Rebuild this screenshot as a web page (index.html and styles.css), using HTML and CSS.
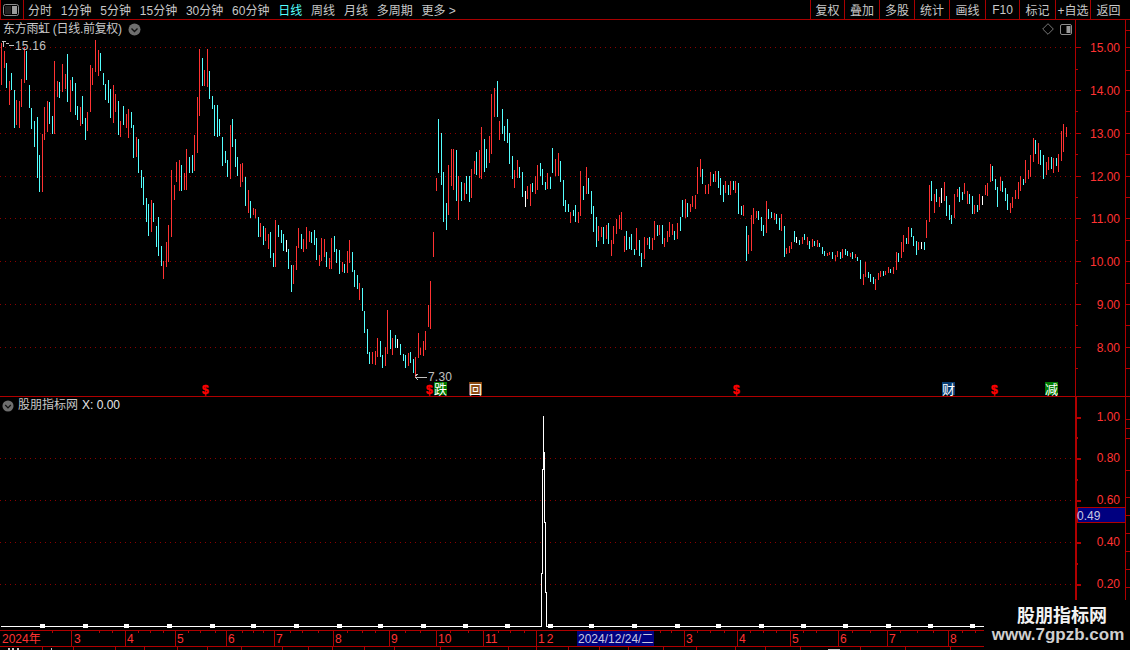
FILE: index.html
```html
<!DOCTYPE html>
<html lang="zh-CN">
<head>
<meta charset="utf-8">
<title>东方雨虹</title>
<link rel="stylesheet" href="styles.css">
</head>
<body>
<div class="app">
  <header class="toolbar">
    <div class="tool-icon">
      <svg class="panel-glyph" width="16" height="12" viewBox="0 0 16 12"><rect x="0.5" y="0.5" width="15" height="11" rx="2" fill="none" stroke="#8c8c8c"/><rect x="9" y="2" width="5" height="8" fill="#9a9a9a"/><rect x="2" y="2" width="6" height="8" fill="#222"/></svg>
    </div>
    <nav class="tabs">
      <span>分时</span><span>1分钟</span><span>5分钟</span><span>15分钟</span><span>30分钟</span><span>60分钟</span><span class="on">日线</span><span>周线</span><span>月线</span><span>多周期</span><span>更多 &gt;</span>
    </nav>
    <div class="actions">
      <span>复权</span><span>叠加</span><span>多股</span><span>统计</span><span>画线</span><span>F10</span><span>标记</span><span>+自选</span><span>返回</span>
    </div>
  </header>

  <section class="panel price">
    <svg class="chart" width="1130" height="376" viewBox="0 20 1130 376" shape-rendering="crispEdges">
      <path class="grid" d="M0 47.5H1074M0 90.5H1074M0 133.5H1074M0 176.5H1074M0 218.5H1074M0 261.5H1074M0 304.5H1074M0 347.5H1074"/>
      <path class="c-red" d="M1.5 43V85M4.5 51V68M9.5 81V105M16.5 100V125M19.5 101V128M21.5 79V107M24.5 47V83M42.5 134V192M44.5 107V140M47.5 101V132M54.5 61V134M57.5 81V97M62.5 64V92M65.5 74V89M70.5 80V112M80.5 107V126M87.5 112V131M90.5 65V112M92.5 68V85M95.5 40V72M98.5 50V76M113.5 85V123M115.5 94V112M120.5 121V137M126.5 114V128M128.5 109V138M136.5 137V157M151.5 200V232M163.5 261V279M166.5 242V267M168.5 225V262M171.5 170V237M174.5 185V200M176.5 162V182M179.5 160V191M184.5 173V190M186.5 149V190M194.5 135V171M197.5 97V153M199.5 49V116M204.5 70V86M207.5 49V87M230.5 125V179M240.5 164V187M242.5 163V182M248.5 190V213M253.5 208V215M255.5 209V218M260.5 223V237M265.5 228V241M268.5 234V249M275.5 220V267
      M293.5 265V284M296.5 246V270M298.5 228V248M303.5 239V252M306.5 227V249M309.5 231V242M319.5 255V266M321.5 238V261M324.5 239V257M329.5 258V269M331.5 238V269M342.5 262V272M347.5 251V273M349.5 240V263M359.5 283V300M372.5 352V364M375.5 351V365M377.5 338V357M385.5 347V366M387.5 310V354M392.5 338V355M408.5 353V366M415.5 357V377M418.5 333V358M420.5 348V355M423.5 341V356M425.5 331V350M428.5 305V327M430.5 281V329M433.5 232V257M436.5 178V191M448.5 165V215M451.5 149V186M453.5 149V190M458.5 176V220M464.5 183V200M471.5 169V198M474.5 161V174M479.5 150V178M481.5 127V179M489.5 136V163M491.5 94V154M494.5 88V117M499.5 121V140M514.5 170V188M517.5 160V178M527.5 186V199M530.5 184V206M535.5 176V194M537.5 165V190M547.5 173V189M555.5 159V176M558.5 153V176
      M570.5 212V223M578.5 212V223M580.5 171V216M586.5 167V194M598.5 226V241M601.5 227V237M606.5 225V239M611.5 240V256M613.5 226V244M616.5 219V234M619.5 215V229M621.5 212V230M624.5 236V252M636.5 228V250M644.5 237V259M647.5 238V245M652.5 238V250M654.5 221V240M659.5 225V235M664.5 238V247M667.5 231V242M669.5 222V237M672.5 224V235M677.5 223V239M685.5 199V218M690.5 204V212M692.5 196V207M695.5 195V209M697.5 167V194M700.5 159V177M705.5 185V194M708.5 184V194M710.5 172V186M715.5 171V182M725.5 181V193M730.5 181V195M735.5 181V193M743.5 205V216M748.5 235V254M751.5 215V251M753.5 208V224M756.5 211V218M766.5 201V233M774.5 213V220M781.5 214V231M786.5 248V254M789.5 246V253M791.5 242V249M802.5 237V244M807.5 237V245M812.5 239V247M817.5 240V247
      M827.5 253V256M829.5 252V255M835.5 255V261M837.5 251V257M842.5 249V258M850.5 253V257M855.5 254V258M863.5 274V285M865.5 262V277M875.5 279V290M878.5 273V280M880.5 271V277M885.5 271V275M888.5 267V273M893.5 267V274M896.5 252V270M901.5 242V258M903.5 235V252M908.5 227V244M918.5 242V250M926.5 220V238M929.5 185V222M934.5 194V213M939.5 197V207M944.5 182V201M954.5 194V218M957.5 189V197M964.5 183V194M967.5 191V204M974.5 205V214M979.5 194V210M985.5 185V195M987.5 183V196M990.5 164V182M1000.5 177V191M1010.5 203V213M1012.5 197V208M1015.5 190V199M1018.5 182V199M1020.5 176V191M1025.5 160V183M1028.5 170V179M1030.5 155V177M1033.5 138V162M1038.5 143V164M1046.5 162V175M1048.5 157V170M1053.5 158V173M1058.5 154V172M1061.5 131V161M1063.5 124V152M1066.5 127V137"/>
      <path class="c-cyan" d="M6.5 63V88M11.5 73V90M14.5 90V128M26.5 51V80M29.5 85V108M31.5 108V129M34.5 121V147M37.5 117V178M39.5 155V192M49.5 102V124M52.5 116V134M59.5 82V98M67.5 54V102M72.5 77V91M75.5 83V115M77.5 106V120M82.5 96V124M85.5 118V140M100.5 53V71M103.5 73V85M105.5 84V100M108.5 80V103M110.5 89V118M118.5 101V135M123.5 106V125M131.5 112V128M133.5 125V158M138.5 139V173M141.5 170V188M143.5 177V205M146.5 198V222M148.5 204V236M153.5 203V222M156.5 226V247M158.5 217V256M161.5 246V266M181.5 165V191M189.5 157V173M192.5 155V173M202.5 58V86M209.5 71V99M212.5 96V109M214.5 105V136M217.5 105V137M219.5 119V136M222.5 137V166M225.5 151V163M227.5 160V177M232.5 119V147M235.5 139V167M237.5 157V176M245.5 177V206M250.5 201V218M258.5 217V237M263.5 226V245M270.5 232V258M273.5 253V267M278.5 225V237
      M281.5 230V243M283.5 234V251M288.5 249V269M291.5 265V292M301.5 234V249M311.5 232V243M314.5 230V245M316.5 238V260M326.5 252V267M334.5 236V252M336.5 249V263M339.5 250V274M344.5 264V273M352.5 252V272M354.5 270V287M357.5 275V289M362.5 288V311M364.5 311V333M367.5 329V354M369.5 352V364M380.5 341V357M382.5 355V368M390.5 330V349M395.5 335V348M400.5 344V355M403.5 354V361M405.5 355V368M410.5 352V363M413.5 359V373M438.5 119V173M441.5 133V185M443.5 172V222M446.5 203V230M456.5 150V201M461.5 182V201M466.5 176V194M469.5 176V202M476.5 152V175M484.5 139V172M486.5 149V168M497.5 81V117M502.5 109V134M504.5 126V141M507.5 119V143M509.5 133V164M512.5 156V179M519.5 167V178M522.5 172V197M532.5 183V192M540.5 163V176M542.5 169V185M545.5 182V190M550.5 177V189M552.5 148V173
      M560.5 161V182M563.5 180V206M565.5 200V212M568.5 204V212M573.5 210V216M575.5 205V222M583.5 186V200M588.5 178V194M591.5 191V214M593.5 206V232M596.5 217V247M603.5 227V244M608.5 223V244M626.5 231V250M629.5 237V249M631.5 234V250M634.5 249V255M639.5 240V256M641.5 253V267M649.5 237V249M657.5 225V236M662.5 225V244M674.5 231V240M680.5 217V231M682.5 200V217M687.5 203V217M702.5 169V184M713.5 174V182M718.5 171V188M720.5 178V195M723.5 185V202M728.5 185V195M733.5 181V190M738.5 183V214M741.5 206V215M746.5 226V261M758.5 211V220M761.5 217V231M763.5 225V236M768.5 209V219M771.5 212V218M776.5 214V224M779.5 218V230M784.5 226V257M794.5 231V242M799.5 240V245M804.5 234V240M809.5 241V249M814.5 241V246M819.5 243V247
      M822.5 247V254M824.5 251V256M832.5 252V259M840.5 252V259M845.5 249V255M847.5 251V256M852.5 252V259M857.5 257V261M860.5 260V279M868.5 272V278M870.5 274V282M873.5 277V284M883.5 271V276M890.5 269V273M898.5 253V262M906.5 238V244M911.5 228V237M913.5 236V246M916.5 241V255M924.5 242V250M931.5 181V201M936.5 189V202M946.5 196V216M949.5 205V220M951.5 215V224M959.5 187V202M962.5 192V200M969.5 194V204M972.5 196V214M977.5 205V212M992.5 166V181M995.5 179V190M997.5 187V207M1002.5 181V192M1005.5 188V201M1007.5 194V210M1023.5 179V185M1035.5 140V154M1040.5 150V165M1043.5 155V179M1051.5 157V169M1056.5 158V166"/>
      <path class="c-white" d="M286.5 240V252M397.5 339V348M525.5 191V207M796.5 237V243M921.5 242V249M941.5 188V203M982.5 196V205"/>
      <path class="axis" d="M1075.5 20V396M1125.5 20V396M1075 47.5H1081M1075 90.5H1081M1075 133.5H1081M1075 176.5H1081M1075 218.5H1081M1075 261.5H1081M1075 304.5H1081M1075 347.5H1081M1075 69.5H1078M1075 111.5H1078M1075 154.5H1078M1075 197.5H1078M1075 240.5H1078M1075 283.5H1078M1075 325.5H1078M1075 368.5H1078M1126 30.5H1130M1126 47.5H1130M1126 70.5H1130M1126 90.5H1130M1126 111.5H1130M1126 133.5H1130M1126 154.5H1130M1126 176.5H1130M1126 197.5H1130M1126 218.5H1130M1126 240.5H1130M1126 261.5H1130M1126 283.5H1130M1126 304.5H1130M1126 325.5H1130M1126 347.5H1130M1126 368.5H1130"/>
      <g class="labels" text-anchor="end">
        <text x="1120" y="52">15.00</text><text x="1120" y="95">14.00</text><text x="1120" y="138">13.00</text><text x="1120" y="181">12.00</text><text x="1120" y="223">11.00</text><text x="1120" y="266">10.00</text><text x="1120" y="309">9.00</text><text x="1120" y="352">8.00</text>
      </g>
      <path class="note-line" d="M2 41H3V47M3 41H6M6 43H9M9 45H14M415 377H427M415 376L418 374M415 377L418 380"/>
      <text class="note" x="15" y="50">15.16</text>
      <text class="note" x="428" y="381">7.30</text>
      <g class="marks">
        <text class="dollar" x="202" y="394">$</text>
        <text class="dollar" x="426" y="394">$</text>
        <text class="dollar" x="733" y="394">$</text>
        <text class="dollar" x="991" y="394">$</text>
        <rect class="m-green" x="434" y="382" width="13" height="13"/><text class="m-text" x="434" y="394">跌</text>
        <rect class="m-brown" x="469" y="382" width="13" height="13"/><text class="m-text" x="469" y="394">回</text>
        <rect class="m-blue" x="942" y="382" width="13" height="13"/><text class="m-text" x="942" y="394">财</text>
        <rect class="m-green" x="1045" y="382" width="13" height="13"/><text class="m-text" x="1045" y="394">减</text>
      </g>
    </svg>
    <div class="caption">
      <span class="title">东方雨虹 (日线.前复权)</span>
      <svg class="chev" width="13" height="13" viewBox="0 0 13 13"><circle cx="6.5" cy="6.5" r="6" fill="#6e6e6e"/><path d="M3.5 5.5L6.5 8.5L9.5 5.5" fill="none" stroke="#111" stroke-width="1.4"/></svg>
    </div>
    <div class="corner-tools">
      <svg width="12" height="12" viewBox="0 0 12 12"><path d="M6 .7L11.3 6L6 11.3L.7 6Z" fill="none" stroke="#777"/></svg>
      <svg width="12" height="11" viewBox="0 0 12 11"><rect x=".5" y=".5" width="11" height="10" rx="1.5" fill="none" stroke="#8c8c8c"/><rect x="6.5" y="2" width="4" height="7" fill="#9a9a9a"/></svg>
    </div>
  </section>

  <section class="panel indicator">
    <svg class="chart" width="1130" height="233" viewBox="0 397 1130 233" shape-rendering="crispEdges">
      <path class="grid" d="M0 458.5H1074M0 500.5H1074M0 542.5H1074M0 584.5H1074"/>
      <path class="axis thick" d="M1076 397V600M1075 417.5H1081M1075 458.5H1081M1075 500.5H1081M1075 542.5H1081M1075 584.5H1081M1075 437.5H1078M1075 479.5H1078M1075 521.5H1078M1075 563.5H1078"/>
      <path class="axis" d="M1125.5 397V600M1126 419.5H1130M1126 428.5H1130M1126 438.5H1130M1126 470.5H1130M1126 497.5H1130M1126 515.5H1130M1126 533.5H1130M1126 551.5H1130M1126 569.5H1130M1126 587.5H1130"/>
      <g class="labels" text-anchor="end">
        <text x="1120" y="421">1.00</text><text x="1120" y="462">0.80</text><text x="1120" y="504">0.60</text><text x="1120" y="546">0.40</text><text x="1120" y="588">0.20</text>
      </g>
      <rect class="val-box" x="1077" y="507.5" width="48" height="15"/>
      <text class="val-text" x="1077" y="520">0.49</text>
      <path class="spike" d="M1 626.5H541V573.5H542V469.5H543V416V452H544V522H545V592H546V626.5H984"/>
      <path class="knots" d="M40 624h5v4h-5zM83 624h5v4h-5zM124 624h5v4h-5zM167 624h5v4h-5zM210 624h5v4h-5zM251 624h5v4h-5zM294 624h5v4h-5zM337 624h5v4h-5zM378 624h5v4h-5zM421 624h5v4h-5zM463 624h5v4h-5zM505 624h5v4h-5zM548 624h5v4h-5zM589 624h5v4h-5zM632 624h5v4h-5zM675 624h5v4h-5zM716 624h5v4h-5zM759 624h5v4h-5zM801 624h5v4h-5zM843 624h5v4h-5zM886 624h5v4h-5zM928 624h5v4h-5zM970 624h5v4h-5z"/>
    </svg>
    <div class="caption lower">
      <svg class="chev" width="12" height="12" viewBox="0 0 13 13"><circle cx="6.5" cy="6.5" r="6" fill="#6e6e6e"/><path d="M3.5 5.5L6.5 8.5L9.5 5.5" fill="none" stroke="#111" stroke-width="1.4"/></svg>
      <span>股朋指标网</span>
      <span class="x-val">X: 0.00</span>
    </div>
  </section>

  <footer class="timeline">
    <svg class="chart" width="1130" height="20" viewBox="0 630 1130 20" shape-rendering="crispEdges">
      <path class="axis" d="M0 630.5H984M0 646.5H984M71.5 631V646M125.5 631V646M175.5 631V646M226.5 631V646M274.5 631V646M333.5 631V646M389.5 631V646M436.5 631V646M483.5 631V646M536.5 631V646M684.5 631V646M737.5 631V646M790.5 631V646M838.5 631V646M887.5 631V646M948.5 631V646
      M52.5 631V633M99.5 631V633M112.5 631V633M138.5 631V633M150.5 631V633M163.5 631V633M188.5 631V633M200.5 631V633M215.5 631V633M242.5 631V633M253.5 631V633M263.5 631V633M290.5 631V633M302.5 631V633M318.5 631V633M347.5 631V633M362.5 631V633M375.5 631V633M405.5 631V633M420.5 631V633M450.5 631V633M468.5 631V633M498.5 631V633M510.5 631V633M524.5 631V633M660.5 631V633M671.5 631V633M697.5 631V633M710.5 631V633M724.5 631V633M750.5 631V633M763.5 631V633M776.5 631V633M803.5 631V633M816.5 631V633M852.5 631V633M870.5 631V633M900.5 631V633M917.5 631V633M933.5 631V633M962.5 631V633M975.5 631V633
      M42.5 647V650M73.5 647V650M115.5 647V650M144.5 647V650M177.5 647V650M207.5 647V650M241.5 647V650M282.5 647V650M308.5 647V650M332.5 647V650M364.5 647V650M394.5 647V650M440.5 647V650M508.5 647V650M536.5 647V650M568.5 647V650M599.5 647V650M628.5 647V650M663.5 647V650M696.5 647V650M735.5 647V650M765.5 647V650M800.5 647V650M860.5 647V650M905.5 647V650M950.5 647V650"/>
      <g class="labels ticks">
        <text x="2" y="643">2024年</text><text x="74" y="643">3</text><text x="127" y="643">4</text><text x="177" y="643">5</text><text x="228" y="643">6</text><text x="276" y="643">7</text><text x="335" y="643">8</text><text x="391" y="643">9</text><text x="438" y="643">10</text><text x="485" y="643">11</text><text x="538" y="643" class="wide">12</text><text x="686" y="643">3</text><text x="739" y="643">4</text><text x="792" y="643">5</text><text x="840" y="643">6</text><text x="889" y="643">7</text><text x="950" y="643">8</text>
      </g>
      <rect class="date-box" x="577" y="631" width="77" height="15"/>
      <text class="date-text" x="578" y="643">2024/12/24/二</text>
      <path class="crumbs" d="M8 648h2v2h-2zM12 648h2v2h-2zM17 648h2v2h-2zM51 648h1v2h-1zM828 649h12v1h-12z"/>
    </svg>
  </footer>

  <aside class="watermark">
    <div class="wm-name">股朋指标网</div>
    <div class="wm-url">www.7gpzb.com</div>
  </aside>
</div>
</body>
</html>
```
FILE: styles.css
```css
* { box-sizing: border-box; }
html, body { margin: 0; padding: 0; background: #000; overflow: hidden; }
body { font: 12px "Liberation Sans", "Noto Sans CJK SC", sans-serif; color: #c8c8c8; }
.app { position: relative; width: 1130px; height: 650px; display: flex; flex-direction: column; background: #000; }

.toolbar { display: flex; align-items: stretch; height: 20px; border-bottom: 1px solid #a80000; flex: none; }
.tool-icon { width: 24px; display: flex; align-items: center; justify-content: center; padding-right: 3px; border-right: 1px solid #a80000; border-left: 1px solid #a80000; }
.tabs { display: flex; align-items: center; gap: 8.8px; padding-left: 4px; flex: 1; white-space: nowrap; }
.tabs .on { color: #54ffff; }
.actions { display: grid; grid-template-columns: 34px 35px 35px 35px 36px 34px 36px 35px 40px; }
.actions span { display: flex; align-items: center; justify-content: center; border-left: 1px solid #a80000; white-space: nowrap; }
.actions span:last-child { padding-right: 4px; }

.panel { position: relative; flex: none; }
.price { height: 377px; border-bottom: 1px solid #b00000; }
.indicator { height: 233px; }
.timeline { height: 20px; flex: none; }
.chart { display: block; overflow: visible; }

.grid { fill: none; stroke: #8c0000; stroke-dasharray: 1 4; }
.c-red { fill: none; stroke: #ff3232; }
.c-cyan { fill: none; stroke: #54ffff; }
.c-white { fill: none; stroke: #fff; }
.axis { fill: none; stroke: #b00000; }
.axis.thick { stroke-width: 2; }
.labels text { font: 12px "Liberation Sans", "Noto Sans CJK SC", sans-serif; fill: #ff3232; }
.labels .wide { letter-spacing: 2px; }
.note-line { fill: none; stroke: #c0c0c0; }
.note { font: 12px "Liberation Sans", sans-serif; fill: #c0c0c0; letter-spacing: .2px; }
.dollar { font: bold 12px "Liberation Sans", sans-serif; fill: #f00; stroke: #f00; stroke-width: .4px; }
.m-green { fill: #007a00; }
.m-brown { fill: #8a4a14; }
.m-blue { fill: #063c72; }
.m-text { font: 13px "Noto Sans CJK SC", sans-serif; fill: #fff; }
.val-box { fill: #000080; stroke: #b00000; }
.val-text { font: 12px "Liberation Sans", sans-serif; fill: #c8c8e0; }
.spike { fill: none; stroke: #fff; }
.knots { fill: #fff; }
.date-box { fill: #000080; }
.date-text { font: 12px "Liberation Sans", "Noto Sans CJK SC", sans-serif; fill: #c8c8e0; }
.crumbs { fill: #c8c8c8; }

.caption { position: absolute; left: 3px; top: 2px; display: flex; align-items: center; gap: 6px; line-height: 15px; white-space: nowrap; }
.caption .title { letter-spacing: -.3px; }
.caption.lower { left: 2px; top: 1px; gap: 4px; }
.x-val { color: #e6e6e6; }
.corner-tools { position: absolute; left: 1042px; top: 3px; display: flex; gap: 6px; align-items: center; }

.watermark { position: absolute; left: 984px; top: 600px; width: 146px; height: 50px; background: #000; text-align: center; }
.wm-name { font: bold 18px/22px "Noto Sans CJK SC", sans-serif; color: #f2f2f2; margin-top: 3px; padding-left: 10px; }
.wm-url { font: bold 17px/20px "Liberation Sans", sans-serif; color: #cfcfcf; padding-left: 2px; white-space: nowrap; }
```
